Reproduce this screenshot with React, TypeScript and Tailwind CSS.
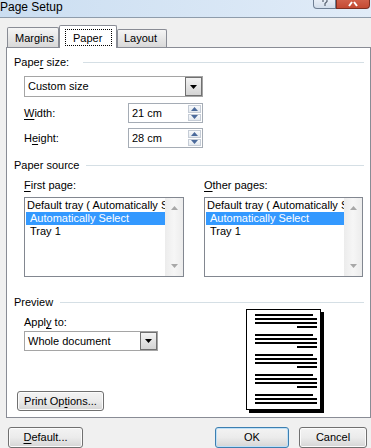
import React from "react";

const U = ({ children }: { children: React.ReactNode }) => (
  <span className="underline decoration-1 underline-offset-[2px]">{children}</span>
);

const GroupHead = ({ label, gap }: { label: React.ReactNode; gap: string }) => (
  <div className="flex items-center h-[13px] pl-[7px] pr-[6px]">
    <span className="leading-[13px] whitespace-nowrap">{label}</span>
    <div className={`flex-1 h-px bg-[#d5dfe5] ${gap}`} />
  </div>
);

const DownArrow = () => (
  <svg width="7" height="4" viewBox="0 0 7 4">
    <path d="M0 0h7L3.5 4z" fill="#000" />
  </svg>
);

const Combo = ({ value, width }: { value: string; width: string }) => (
  <div className={`flex h-full border border-[#a5a5a5] bg-white ${width}`}>
    <div className="flex-1 flex items-center pl-[3px] whitespace-nowrap">{value}</div>
    <div className="w-[17px] border border-[#707070] bg-gradient-to-b from-[#f3f3f3] to-[#d4d4d4] flex items-center justify-center">
      <DownArrow />
    </div>
  </div>
);

const SpinHalf = ({ up }: { up?: boolean }) => (
  <div className="flex-1 border border-[#c5ccd6] bg-gradient-to-b from-[#f7f9fb] to-[#e4e9ef] flex items-center justify-center">
    <svg width="7" height="4" viewBox="0 0 7 4">
      <path d={up ? "M0 4h7L3.5 0z" : "M0 0h7L3.5 4z"} fill="#4b6a9b" />
    </svg>
  </div>
);

const Spin = ({ value }: { value: string }) => (
  <div className="flex w-[75px] h-full border border-[#a5acb5] bg-white">
    <div className="flex-1 flex items-center pl-[3px]">{value}</div>
    <div className="w-[15px] flex flex-col gap-px p-px">
      <SpinHalf up />
      <SpinHalf />
    </div>
  </div>
);

const ListBox = ({ width }: { width: string }) => (
  <div className={`flex h-[80px] border border-[#828790] bg-white ${width}`}>
    <div className="flex-1 overflow-hidden pt-px pl-px">
      <div className="h-[13px] leading-[13px] whitespace-nowrap pl-px">Default tray ( Automatically Select )</div>
      <div className="h-[13px] leading-[13px] whitespace-nowrap bg-[#3399ff] text-white pl-[4px]">Automatically Select</div>
      <div className="h-[13px] leading-[13px] whitespace-nowrap pl-[4px]">Tray 1</div>
    </div>
    <div className="w-[18px] bg-gradient-to-r from-[#ececec] via-[#f6f6f6] to-[#ececec] flex flex-col justify-between items-center pt-[8px] pb-[8px]">
      <svg width="7" height="4" viewBox="0 0 7 4">
        <path d="M0 4h7L3.5 0z" fill="#a8a8a8" />
      </svg>
      <svg width="7" height="4" viewBox="0 0 7 4">
        <path d="M0 0h7L3.5 4z" fill="#a8a8a8" />
      </svg>
    </div>
  </div>
);

const Btn = ({ children, width, isDefault }: { children: React.ReactNode; width: string; isDefault?: boolean }) => (
  <div
    className={`h-full ${width} rounded-[3px] border flex items-center justify-center bg-gradient-to-b from-[#f3f3f3] via-[#ebebeb] to-[#d5d5d5] ${
      isDefault ? "border-[#3c7fb1] shadow-[inset_0_0_0_1px_#bfe0f7]" : "border-[#707070] shadow-[inset_0_0_0_1px_#fbfbfb]"
    }`}
  >
    {children}
  </div>
);

const PagePreview = () => {
  const groups = [5, 25, 45, 65];
  return (
    <svg width="78" height="104" viewBox="0 0 78 104">
      <rect x="3" y="3" width="75" height="101" fill="#000" />
      <rect x="0.5" y="0.5" width="74" height="100" fill="#fff" stroke="#000" />
      {groups.map((g) => (
        <g key={g} fill="#000">
          <rect x="9" y={g} width="58" height="2" />
          <rect x="9" y={g + 4} width="62" height="2" />
          <rect x="9" y={g + 8} width="62" height="2" />
          <rect x="51" y={g + 12} width="20" height="2" />
        </g>
      ))}
      <g fill="#000">
        <rect x="9" y="85" width="58" height="2" />
        <rect x="9" y="89" width="62" height="2" />
        <rect x="9" y="93" width="62" height="2" />
      </g>
    </svg>
  );
};

export default function App() {
  return (
    <div className="w-[371px] h-[448px] overflow-hidden bg-[#f0f0f0] text-black text-[11px] font-['Liberation_Sans',Arial,sans-serif]">
      {/* title bar */}
      <div className="flex h-[18px] border-b border-[#8e9cab] bg-gradient-to-r from-[#cbdef1] to-[#e1ecf8]">
        <span className="text-[12px] leading-[13px] pt-[1px] font-['Liberation_Sans',Arial,sans-serif]">Page Setup</span>
        <div className="ml-auto flex items-start mr-[1px]">
          <div className="w-[23px] h-[9px] border border-t-0 border-[#6f7f93] rounded-bl-[4px] bg-gradient-to-b from-[#e8eef6] to-[#d3deeb] flex justify-center">
            <svg width="6" height="8" viewBox="0 0 6 8">
              <path d="M1 0v2M5 0v1.5L3 3.5V6" stroke="#5a6472" strokeWidth="1.2" fill="none" />
            </svg>
          </div>
          <div className="w-[34px] h-[9px] border border-t-0 border-[#7d2f22] rounded-br-[4px] bg-gradient-to-b from-[#d0604a] to-[#c44a33] flex justify-center">
            <svg width="12" height="7" viewBox="0 0 12 7">
              <path d="M2 6L5 2M10 6L7 2" stroke="#fff" strokeWidth="2" fill="none" />
            </svg>
          </div>
        </div>
      </div>

      {/* tabs */}
      <div className="relative z-10 mt-[7px] h-[23px] flex items-end pl-[7px]">
        <div className="w-[52px] h-[20px] mb-px border border-b-0 border-[#898c95] rounded-t-[2px] bg-gradient-to-b from-[#f5f5f5] to-[#d9d9d9] pl-[7px] pt-[4px] leading-[13px]">
          Margins
        </div>
        <div className="w-[58px] h-[23px] border border-b-0 border-[#898c95] rounded-t-[2px] bg-white pl-[5px] pt-[3px]">
          <div className="w-[47px] h-[17px] border border-dotted border-black pl-[7px] pt-px leading-[15px]">Paper</div>
        </div>
        <div className="w-[50px] h-[18px] mb-px border border-b-0 border-[#898c95] rounded-t-[2px] bg-gradient-to-b from-[#f5f5f5] to-[#d9d9d9] pl-[6px] pt-[2px] leading-[13px]">
          Layout
        </div>
      </div>

      {/* tab panel */}
      <div className="-mt-px ml-[6px] w-[365px] h-[371px] border border-[#898c95] bg-white">
        <div className="mt-[8px]">
          <GroupHead label={<>Pape<U>r</U> size:</>} gap="ml-[14px]" />
        </div>
        <div className="mt-[7px] ml-[17px] h-[21px]">
          <Combo value="Custom size" width="w-[179px]" />
        </div>
        <div className="mt-[6px] ml-[17px] h-[20px] flex">
          <div className="w-[104px] flex items-center">
            <U>W</U>idth:
          </div>
          <Spin value="21 cm" />
        </div>
        <div className="mt-[5px] ml-[17px] h-[20px] flex">
          <div className="w-[104px] flex items-center">
            H<U>e</U>ight:
          </div>
          <Spin value="28 cm" />
        </div>

        <div className="mt-[11px]">
          <GroupHead label="Paper source" gap="ml-[7px]" />
        </div>
        <div className="mt-[7px] ml-[17px] flex h-[13px] leading-[13px]">
          <div className="w-[180px]">
            <U>F</U>irst page:
          </div>
          <div>
            <U>O</U>ther pages:
          </div>
        </div>
        <div className="mt-[5px] ml-[17px] flex gap-[20px]">
          <ListBox width="w-[160px]" />
          <ListBox width="w-[159px]" />
        </div>

        <div className="mt-[19px]">
          <GroupHead label="Preview" gap="ml-[7px]" />
        </div>
        <div className="flex">
          <div className="w-[239px] pl-[10px] flex flex-col items-start">
            <div className="mt-[7px] ml-[7px] h-[13px] leading-[13px]">
              Appl<U>y</U> to:
            </div>
            <div className="mt-[2px] ml-[7px] h-[20px]">
              <Combo value="Whole document" width="w-[134px]" />
            </div>
            <div className="mt-[40px] h-[20px]">
              <Btn width="w-[87px]">
                Print Op<U>t</U>ions...
              </Btn>
            </div>
          </div>
          <div className="mt-0">
            <PagePreview />
          </div>
        </div>
      </div>

      {/* bottom buttons */}
      <div className="mt-[9px] h-[21px] flex pl-[8px] pr-[4px]">
        <Btn width="w-[75px]">
          <U>D</U>efault...
        </Btn>
        <div className="ml-auto h-full flex gap-[10px]">
          <Btn width="w-[74px]" isDefault>
            OK
          </Btn>
          <Btn width="w-[68px]">Cancel</Btn>
        </div>
      </div>
    </div>
  );
}
